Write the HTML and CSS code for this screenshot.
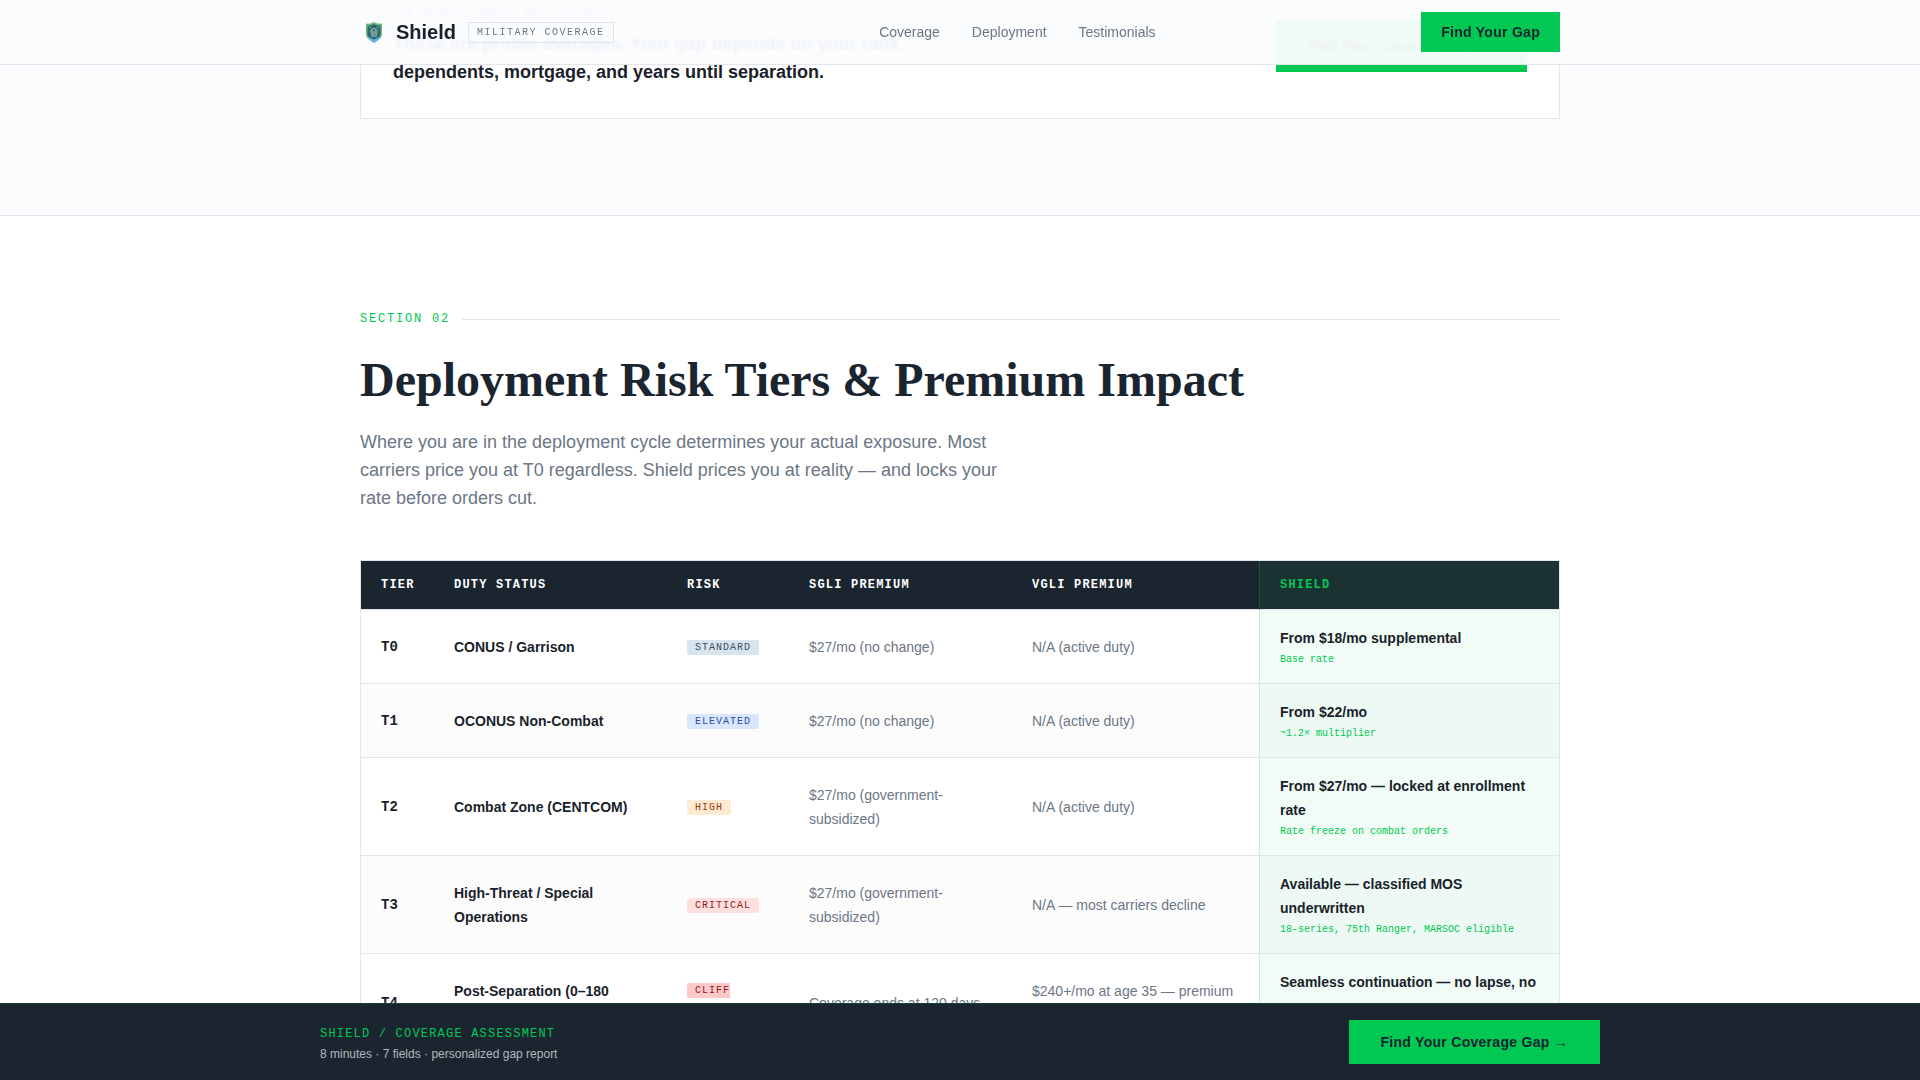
FILE: index.html
```
<!DOCTYPE html>
<html lang="en">

<head>
    <meta charset="UTF-8">
    <meta name="viewport" content="width=device-width, initial-scale=1.0">
    <title>Shield - Military Coverage</title>
    <link rel="stylesheet" href="styles.css">
</head>

<body>
    <header class="site-header">
        <div class="container header-inner">
            <div class="brand">
                <svg class="brand-icon" viewBox="0 0 28 28" aria-hidden="true">
                    <path d="M6 5.500Q10.500 6.300 14 4q3.500 2.300 8 1.500v10.500c0 4-4 6.500-8 9-4-2.500-8-5-8-9z" fill="#6fb978" />
                    <path d="M7.500 7.500q3.500.5 6.500-1.500 3 2 6.500 1.500v8.500c0 3-3 5-6.500 7.500C10.500 21 7.500 19 7.500 16z" fill="#2f6873" />
                    <path d="M7.500 18.500l6.500 3 6.500-3-3 4-3.500 2.500-3.500-2.500z" fill="#62b6e6" />
                    <path d="M8 8.500l4 1.500-2 3 2 4M20 8.500L16 10l2 3-2 4" fill="none" stroke="#5c9f79" />
                    <path d="M12 19v-7l2-2 2 2v7M12.500 14h3M14 15v4" fill="none" stroke="#a9c8be" />
                </svg>
                <span class="brand-name">Shield</span>
                <span class="brand-tag">MILITARY COVERAGE</span>
            </div>
            <nav class="nav-links">
                <a href="#coverage">Coverage</a>
                <a href="#deployment">Deployment</a>
                <a href="#testimonials">Testimonials</a>
            </nav>
            <button type="button" class="btn btn-small">Find Your Gap</button>
        </div>
    </header>

    <main>
        <section id="coverage" class="coverage">
            <div class="container">
                <div class="gap-card">
                    <div class="gap-text">
                        <div class="gap-label">THE NUMBERS ABOVE ARE ESTIMATES</div>
                        <p>These are profile averages. Your gap depends on your rank,<br>dependents, mortgage, and years until separation.</p>
                    </div>
                    <button type="button" class="btn btn-large">Find Your Coverage Gap →</button>
                </div>
            </div>
        </section>

        <section id="deployment" class="deployment">
            <div class="container">
                <div class="section-label">SECTION 02</div>
                <h2>Deployment Risk Tiers &amp; Premium Impact</h2>
                <p class="lead">Where you are in the deployment cycle determines your actual exposure. Most carriers price you at T0 regardless. Shield prices you at reality — and locks your rate before orders cut.</p>

                <div class="table-wrap">
                    <table>
                        <colgroup>
                            <col class="col-tier">
                            <col class="col-duty">
                            <col class="col-risk">
                            <col class="col-sgli">
                            <col class="col-vgli">
                            <col>
                        </colgroup>
                        <thead>
                            <tr>
                                <th>TIER</th>
                                <th>DUTY STATUS</th>
                                <th>RISK</th>
                                <th>SGLI PREMIUM</th>
                                <th>VGLI PREMIUM</th>
                                <th class="shield">SHIELD</th>
                            </tr>
                        </thead>
                        <tbody>
                            <tr>
                                <td class="tier">T0</td>
                                <td class="duty">CONUS / Garrison</td>
                                <td><span class="badge standard">STANDARD</span></td>
                                <td>$27/mo (no change)</td>
                                <td>N/A (active duty)</td>
                                <td class="shield">From $18/mo supplemental<span class="note">Base rate</span></td>
                            </tr>
                            <tr>
                                <td class="tier">T1</td>
                                <td class="duty">OCONUS Non-Combat</td>
                                <td><span class="badge elevated">ELEVATED</span></td>
                                <td>$27/mo (no change)</td>
                                <td>N/A (active duty)</td>
                                <td class="shield">From $22/mo<span class="note">~1.2× multiplier</span></td>
                            </tr>
                            <tr>
                                <td class="tier">T2</td>
                                <td class="duty">Combat Zone (CENTCOM)</td>
                                <td><span class="badge high">HIGH</span></td>
                                <td>$27/mo (government-subsidized)</td>
                                <td>N/A (active duty)</td>
                                <td class="shield">From $27/mo — locked at enrollment rate<span class="note">Rate freeze on combat orders</span></td>
                            </tr>
                            <tr>
                                <td class="tier">T3</td>
                                <td class="duty">High-Threat / Special Operations</td>
                                <td><span class="badge critical">CRITICAL</span></td>
                                <td>$27/mo (government-subsidized)</td>
                                <td>N/A — most carriers decline</td>
                                <td class="shield">Available — classified MOS underwritten<span class="note">18-series, 75th Ranger, MARSOC eligible</span></td>
                            </tr>
                            <tr>
                                <td class="tier">T4</td>
                                <td class="duty">Post-Separation (0–180 days)</td>
                                <td><span class="badge cliff">CLIFF PERIOD</span></td>
                                <td>Coverage ends at 120 days</td>
                                <td>$240+/mo at age 35 — premium spike</td>
                                <td class="shield">Seamless continuation — no lapse, no re-exam<span class="note">Rate locked from active duty</span></td>
                            </tr>
                        </tbody>
                    </table>
                </div>
            </div>
        </section>
    </main>

    <div class="sticky-bar">
        <div class="sticky-inner">
            <div class="sticky-text">
                <div class="sticky-title">SHIELD / COVERAGE ASSESSMENT</div>
                <div class="sticky-sub">8 minutes · 7 fields · personalized gap report</div>
            </div>
            <button type="button" class="btn btn-large">Find Your Coverage Gap →</button>
        </div>
    </div>
</body>

</html>
```
FILE: styles.css
```
:root {
    --green: #00c853;
    --navy: #1a2530;
    --ink: #1a1f2b;
    --gray: #6b7785;
    --line: #e2e6ea;
    --mist: #fafcfe;
    --sans: "Liberation Sans", Arial, sans-serif;
    --serif: "Liberation Serif", "Times New Roman", serif;
    --mono: "Liberation Mono", "Courier New", monospace;
}

* {
    box-sizing: border-box;
}

body {
    margin: 0;
    font-family: var(--sans);
    color: var(--ink);
    background: #fff;
}

.container {
    max-width: 1200px;
    margin: 0 auto;
}

/* header */
.site-header {
    position: fixed;
    top: 0;
    left: 0;
    right: 0;
    z-index: 10;
    background: rgba(250, 252, 254, 0.96);
    backdrop-filter: blur(1px);
    border-bottom: 1px solid var(--line);
}

.header-inner {
    display: flex;
    align-items: center;
    justify-content: space-between;
    height: 64px;
}

.brand {
    display: flex;
    align-items: center;
}

.brand-icon {
    width: 28px;
    height: 28px;
    margin-right: 8px;
}

.brand-name {
    font-size: 20px;
    font-weight: bold;
}

.brand-tag {
    margin-left: 12px;
    padding: 3px 8px 2px;
    border: 1px solid var(--line);
    font-family: var(--mono);
    font-size: 10px;
    line-height: 14px;
    letter-spacing: 0.15em;
    color: var(--gray);
}

.nav-links {
    display: flex;
    gap: 32px;
}

.nav-links a {
    font-size: 14px;
    color: var(--gray);
    text-decoration: none;
}

.btn {
    border: 0;
    background: var(--green);
    color: var(--navy);
    font-family: var(--sans);
    font-size: 14px;
    font-weight: bold;
    letter-spacing: 0.02em;
    cursor: pointer;
}

.btn-small {
    height: 40px;
    padding: 0 20px;
}

.btn-large {
    height: 44px;
    padding: 0 32px;
}

/* coverage */
.coverage {
    padding-bottom: 96px;
    background: var(--mist);
    border-bottom: 1px solid var(--line);
}

.gap-card {
    display: flex;
    align-items: center;
    justify-content: space-between;
    padding: 6px 32px 32px;
    background: #fff;
    border: 1px solid var(--line);
    border-top: 0;
}

.gap-card .btn {
    height: 52px;
}

.gap-label {
    margin-bottom: 8px;
    font-family: var(--mono);
    font-size: 12px;
    line-height: 16px;
    color: var(--gray);
}

.gap-card p {
    margin: 0;
    font-size: 18px;
    font-weight: bold;
    line-height: 28px;
}

/* deployment */
.deployment {
    padding: 96px 0;
}

.section-label {
    display: flex;
    align-items: center;
    gap: 12px;
    margin-bottom: 23px;
    font-family: var(--mono);
    font-size: 12px;
    line-height: 15px;
    letter-spacing: 0.15em;
    color: var(--green);
}

.section-label::after {
    content: "";
    flex: 1;
    height: 1px;
    background: var(--line);
}

h2 {
    margin: 0 0 18px;
    font-family: var(--serif);
    font-size: 48px;
    line-height: 60px;
    color: var(--navy);
}

.lead {
    max-width: 640px;
    margin: 0 0 48px;
    font-size: 18px;
    line-height: 28px;
    color: var(--gray);
}

.table-wrap {
    border: 1px solid var(--line);
    overflow-x: auto;
}

table {
    width: 100%;
    min-width: 1000px;
    table-layout: fixed;
    border-collapse: separate;
    border-spacing: 0;
    font-size: 14px;
    line-height: 24px;
}

.col-tier {
    width: 73px;
}

.col-duty {
    width: 233px;
}

.col-risk {
    width: 122px;
}

.col-sgli {
    width: 223px;
}

.col-vgli {
    width: 247px;
}

th {
    padding: 16px 20px;
    background: var(--navy);
    border-bottom: 1px solid var(--line);
    color: #fff;
    font-family: var(--mono);
    font-size: 12px;
    line-height: 16px;
    letter-spacing: 0.1em;
    text-align: left;
}

td {
    padding: 16px 20px;
    border-bottom: 1px solid var(--line);
    color: var(--gray);
    vertical-align: middle;
}

tbody tr:nth-child(even) {
    background: #fcfcfd;
}

.tier {
    font-family: var(--mono);
    font-weight: bold;
    color: var(--ink);
}

.duty {
    font-weight: bold;
    color: var(--ink);
}

td.shield {
    background: rgba(0, 200, 83, 0.06);
    border-left: 1px solid rgba(0, 200, 83, 0.2);
    color: var(--ink);
    font-weight: bold;
}

th.shield {
    background: #1a3332;
    border-left: 1px solid #16563d;
    color: var(--green);
}

.note {
    display: block;
    margin-top: 2px;
    font-family: var(--mono);
    font-size: 10px;
    font-weight: normal;
    line-height: 15px;
    color: var(--green);
}

.badge {
    padding: 2px 8px;
    border-radius: 2px;
    font-family: var(--mono);
    font-size: 10px;
    letter-spacing: 0.1em;
}

.standard {
    background: #d8e4ee;
    color: #3c4f63;
}

.elevated {
    background: #d9e7fd;
    color: #2b4aa8;
}

.high {
    background: #ffead2;
    color: #9a3a12;
}

.critical {
    background: #fee0e0;
    color: #991b1b;
}

.cliff {
    background: #fdc8c8;
    color: #8a1c1c;
}

/* bottom bar */
.sticky-bar {
    position: fixed;
    left: 0;
    right: 0;
    bottom: 0;
    z-index: 10;
    padding: 16px 0;
    background: var(--navy);
    border-top: 1px solid #17402f;
}

.sticky-inner {
    display: flex;
    align-items: center;
    justify-content: space-between;
    max-width: 1280px;
    margin: 0 auto;
}

.sticky-text {
    padding-top: 4px;
}

.sticky-title {
    font-family: var(--mono);
    font-size: 12px;
    line-height: 20px;
    letter-spacing: 0.1em;
    color: var(--green);
}

.sticky-sub {
    font-size: 12px;
    line-height: 20px;
    color: #b3b8bd;
}
```
